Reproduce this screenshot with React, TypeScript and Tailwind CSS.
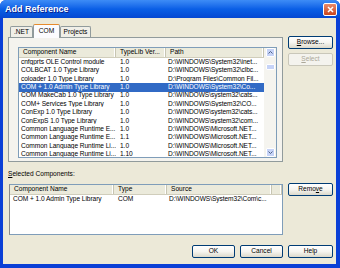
import React from 'react'

const topRows: [string, string, string][] = [
  ['cnfgprts OLE Control module', '1.0', 'D:\\WINDOWS\\System32\\inet...'],
  ['COLBCAT 1.0 Type Library', '1.0', 'D:\\WINDOWS\\System32\\clbc...'],
  ['coloader 1.0 Type Library', '1.0', 'D:\\Program Files\\Common Fil...'],
  ['COM + 1.0 Admin Type Library', '1.0', 'D:\\WINDOWS\\System32\\Co...'],
  ['COM MakeCab 1.0 Type Library', '1.0', 'D:\\WINDOWS\\system32\\cats...'],
  ['COM+ Services Type Library', '1.0', 'D:\\WINDOWS\\System32\\CO...'],
  ['ConExp 1.0 Type Library', '1.0', 'D:\\WINDOWS\\system32\\cats...'],
  ['ConExpS 1.0 Type Library', '1.0', 'D:\\WINDOWS\\system32\\com...'],
  ['Common Language Runtime E...', '1.0', 'D:\\WINDOWS\\Microsoft.NET...'],
  ['Common Language Runtime E...', '1.1', 'D:\\WINDOWS\\Microsoft.NET...'],
  ['Common Language Runtime Li...', '1.0', 'D:\\WINDOWS\\Microsoft.NET...'],
  ['Common Language Runtime Li...', '1.10', 'D:\\WINDOWS\\Microsoft.NET...'],
]

function HeaderCell({ label, width }: { label: string; width: string }) {
  return (
    <div
      className={`${width} flex h-full shrink-0 items-center overflow-hidden whitespace-nowrap border-r border-r-[#c7c5b2] pl-[4px] shadow-[inset_-1px_0_0_#ffffff]`}
    >
      {label}
    </div>
  )
}

function XpButton({
  children,
  width,
  disabled,
}: {
  children: React.ReactNode
  width: string
  disabled?: boolean
}) {
  return (
    <div
      className={`${width} flex h-[13px] shrink-0 items-center justify-center rounded-[2px] border ${
        disabled
          ? 'border-[#c9c7ba] bg-[#f4f3ee] text-[#aca899]'
          : 'border-[#003c74] bg-gradient-to-b from-[#ffffff] via-[#f6f5f0] to-[#dcd9cb] text-black'
      }`}
    >
      {children}
    </div>
  )
}

function ScrollArrow({ up }: { up?: boolean }) {
  return (
    <div className="flex h-[9px] w-[9px] items-center justify-center rounded-[1px] border border-[#ffffff] bg-[#c6d3f7]">
      <svg width="5" height="3" viewBox="0 0 5 3">
        <path
          d={up ? 'M0.5 2.5 L2.5 0.5 L4.5 2.5' : 'M0.5 0.5 L2.5 2.5 L4.5 0.5'}
          fill="none"
          stroke="#4d6185"
          strokeWidth="1"
        />
      </svg>
    </div>
  )
}

export default function App() {
  return (
    <div className="flex h-[268px] w-[340px] flex-col overflow-hidden rounded-t-[6px] bg-[#0a3fd6] font-['Liberation_Sans_Narrow','Liberation_Sans',Arial,sans-serif] text-[6.6px] leading-none text-black">
      <div className="flex h-[18px] shrink-0 items-center justify-between bg-gradient-to-b from-[#3d8cf6] via-[#0a5fe6] to-[#0548d2] pl-[5px] pr-[3px]">
        <div className="pt-[1px] font-['Liberation_Sans',Arial,sans-serif] text-[9px] font-bold text-white [text-shadow:1px_1px_0_#0a1e8c]">
          Add Reference
        </div>
        <div className="flex h-[13px] w-[14px] items-center justify-center rounded-[2px] border border-white bg-gradient-to-b from-[#e98a6a] to-[#c9441b]">
          <svg width="7" height="7" viewBox="0 0 7 7">
            <path d="M1 1 L6 6 M6 1 L1 6" stroke="white" strokeWidth="1.5" />
          </svg>
        </div>
      </div>

      <div className="ml-[3px] mr-[4px] mb-[4px] flex flex-1 flex-col bg-[#ece9d8]">
        <div className="flex pt-[6px] pl-[5px]">
          <div className="flex w-[275px] flex-col">
            <div className="relative z-10 flex h-[13px] items-end pl-[2px]">
              <div className="flex h-[11px] w-[23px] items-center justify-center rounded-t-[2px] border border-b-0 border-[#919b9c] bg-[#f0efe8]">
                .NET
              </div>
              <div className="-mb-[1px] flex h-[14px] w-[27px] items-center justify-center rounded-t-[2px] border border-b-0 border-[#919b9c] border-t-[#e68b2c] bg-[#fcfcfe]">
                COM
              </div>
              <div className="flex h-[11px] w-[31px] items-center justify-center rounded-t-[2px] border border-b-0 border-[#919b9c] bg-[#f0efe8]">
                Projects
              </div>
            </div>
            <div className="h-[125px] border border-[#919b9c] bg-[#f4f3ee] pt-[9px] pl-[9px]">
              <div className="flex h-[111px] w-[259px] border border-[#7f9db9] bg-white">
                <div className="flex w-[245px] flex-col overflow-hidden">
                  <div className="flex h-[10px] shrink-0 border-b border-b-[#d0cdbb] bg-[#ebeadb]">
                    <HeaderCell label="Component Name" width="w-[97px]" />
                    <HeaderCell label="TypeLib Ver..." width="w-[50px]" />
                    <HeaderCell label="Path" width="w-[98px]" />
                  </div>
                  {topRows.map(([name, ver, path], i) => (
                    <div
                      key={i}
                      className={`flex h-[8.4px] shrink-0 items-center whitespace-nowrap tracking-[-0.06px] ${
                        i === 3 ? 'bg-[#316ac5] text-white' : ''
                      }`}
                    >
                      <div className="w-[97px] shrink-0 overflow-hidden pl-[2px]">{name}</div>
                      <div className="w-[50px] shrink-0 overflow-hidden pl-[4px]">{ver}</div>
                      <div className="w-[98px] shrink-0 overflow-hidden pl-[2px]">{path}</div>
                    </div>
                  ))}
                </div>
                <div className="flex w-[12px] flex-col items-center justify-between bg-[#f5f4ef]">
                  <div className="flex flex-col items-center">
                    <ScrollArrow up />
                    <div className="mt-[7px] h-[6px] w-[9px] rounded-[1px] border border-white bg-[#c6d3f7]" />
                  </div>
                  <ScrollArrow />
                </div>
              </div>
            </div>
          </div>
          <div className="ml-[5px] mt-[12px] flex flex-col gap-[4px]">
            <XpButton width="w-[45px]">
              <span className="underline">B</span>rowse...
            </XpButton>
            <XpButton width="w-[45px]" disabled>
              <span className="underline">S</span>elect
            </XpButton>
          </div>
        </div>

        <div className="mt-[9px] h-[9px] pl-[5px]">
          <span className="underline">S</span>elected Components:
        </div>

        <div className="mt-[4px] flex pl-[6px]">
          <div className="flex h-[51px] w-[274px] flex-col overflow-hidden border border-[#7f9db9] border-l-[#8a8a8a] bg-white">
            <div className="flex h-[10px] shrink-0 border-b border-b-[#d0cdbb] bg-[#ebeadb]">
              <HeaderCell label="Component Name" width="w-[104px]" />
              <HeaderCell label="Type" width="w-[53px]" />
              <HeaderCell label="Source" width="w-[105px]" />
              <HeaderCell label="" width="w-[10px]" />
            </div>
            <div className="flex h-[9px] items-center whitespace-nowrap tracking-[-0.06px]">
              <div className="w-[104px] shrink-0 overflow-hidden pl-[3px]">COM + 1.0 Admin Type Library</div>
              <div className="w-[53px] shrink-0 overflow-hidden pl-[4px]">COM</div>
              <div className="w-[105px] shrink-0 overflow-hidden pl-[2px]">D:\WINDOWS\System32\Com\c...</div>
            </div>
          </div>
          <div className="ml-[5px] -mt-[1px]">
            <XpButton width="w-[45px]">
              Remo<span className="underline">v</span>e
            </XpButton>
          </div>
        </div>

        <div className="mt-[10px] flex justify-end gap-[5px] pr-[3px]">
          <XpButton width="w-[43px]">OK</XpButton>
          <XpButton width="w-[43px]">Cancel</XpButton>
          <XpButton width="w-[45px]">Help</XpButton>
        </div>
      </div>
    </div>
  )
}
